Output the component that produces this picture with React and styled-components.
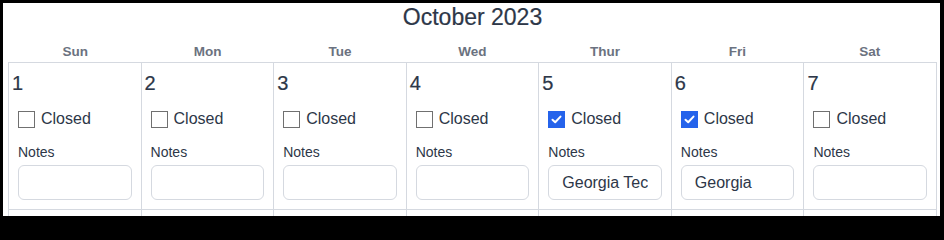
import React, { useState } from 'react';
import styled, { createGlobalStyle } from 'styled-components';

const GlobalStyle = createGlobalStyle`
  html, body {
    margin: 0;
    height: 220px;
    overflow: hidden;
    background: #000;
    font-family: "Liberation Sans", Arial, sans-serif;
  }
`;

const Frame = styled.div`
  height: 220px;
  padding: 3px 4px 4px 3px;
  box-sizing: border-box;
  overflow: hidden;
`;

const Panel = styled.div`
  background: #fff;
  height: 213px;
  padding: 0 3px 0 5px;
  box-sizing: border-box;
  overflow: hidden;
`;

const Title = styled.h2`
  margin: 0;
  text-align: center;
  font-size: 23px;
  line-height: 28px;
  font-weight: 400;
  color: #2d3748;
  -webkit-text-stroke: 0.2px #2d3748;
`;

const WeekHeader = styled.div`
  display: grid;
  grid-template-columns: repeat(7, 1fr);
  padding: 13px 1px 2px;
`;

const DayName = styled.div`
  text-align: center;
  font-size: 13.5px;
  line-height: 16px;
  font-weight: 700;
  color: #6b7280;
`;

const Grid = styled.div`
  display: grid;
  grid-template-columns: repeat(7, 1fr);
  border-top: 1px solid #d5d9e0;
  border-left: 1px solid #d5d9e0;
`;

const Cell = styled.div`
  min-width: 0;
  height: ${p => (p.$stub ? '12px' : 'auto')};
  padding: ${p => (p.$stub ? '0' : '9px 3px 9px')};
  border-right: 1px solid #d5d9e0;
  border-bottom: 1px solid #d5d9e0;
  color: #2d3748;
`;

const DayNumber = styled.div`
  font-size: 20px;
  line-height: 23px;
  -webkit-text-stroke: 0.2px #2d3748;
`;

const Body = styled.div`
  padding: 0 6px;
`;

const CheckRow = styled.label`
  display: flex;
  align-items: center;
  gap: 6px;
  height: 20px;
  margin-top: 14px;
  font-size: 16px;
  line-height: 18px;
  cursor: pointer;
`;

const HiddenInput = styled.input`
  display: none;
`;

const Box = styled.span`
  display: flex;
  align-items: center;
  justify-content: center;
  width: 17px;
  height: 17px;
  box-sizing: border-box;
  border: 1px solid ${p => (p.$checked ? '#2563eb' : '#707070')};
  background: ${p => (p.$checked ? '#2563eb' : '#fff')};
`;

const NotesLabel = styled.div`
  margin-top: 15px;
  font-size: 14px;
  line-height: 16px;
`;

const NotesInput = styled.input`
  display: block;
  width: 100%;
  height: 35px;
  margin-top: 5px;
  padding: 0 13px;
  box-sizing: border-box;
  border: 1px solid #d5d9e0;
  border-radius: 6px;
  font-family: inherit;
  font-size: 16px;
  color: #2d3748;
  background: #fff;
  outline: none;
`;

const days = ['Sun', 'Mon', 'Tue', 'Wed', 'Thur', 'Fri', 'Sat'];

const initial = {
  5: { closed: true, notes: 'Georgia Tech' },
  6: { closed: true, notes: 'Georgia' },
};

function DayCell({ day, entry, onChange }) {
  return (
    <Cell>
      <DayNumber>{day}</DayNumber>
      <Body>
        <CheckRow>
          <HiddenInput
            type="checkbox"
            checked={entry.closed}
            onChange={e => onChange({ ...entry, closed: e.target.checked })}
          />
          <Box $checked={entry.closed}>
            {entry.closed && (
              <svg width="11" height="9" viewBox="0 0 11 9">
                <path d="M1.5 4.8 L4.2 7.3 L9.5 1.6" fill="none" stroke="#fff" strokeWidth="2" strokeLinecap="round" strokeLinejoin="round" />
              </svg>
            )}
          </Box>
          Closed
        </CheckRow>
        <NotesLabel>Notes</NotesLabel>
        <NotesInput
          value={entry.notes}
          onChange={e => onChange({ ...entry, notes: e.target.value })}
        />
      </Body>
    </Cell>
  );
}

export default function App() {
  const [entries, setEntries] = useState(initial);
  const week = [1, 2, 3, 4, 5, 6, 7];

  return (
    <Frame>
      <GlobalStyle />
      <Panel>
        <Title>October 2023</Title>
        <WeekHeader>
          {days.map(d => (
            <DayName key={d}>{d}</DayName>
          ))}
        </WeekHeader>
        <Grid>
          {week.map(day => (
            <DayCell
              key={day}
              day={day}
              entry={entries[day] || { closed: false, notes: '' }}
              onChange={val => setEntries(prev => ({ ...prev, [day]: val }))}
            />
          ))}
          {/* next week's row, only its top edge shows */}
          {week.map(day => (
            <Cell key={`next-${day}`} $stub />
          ))}
        </Grid>
      </Panel>
    </Frame>
  );
}
